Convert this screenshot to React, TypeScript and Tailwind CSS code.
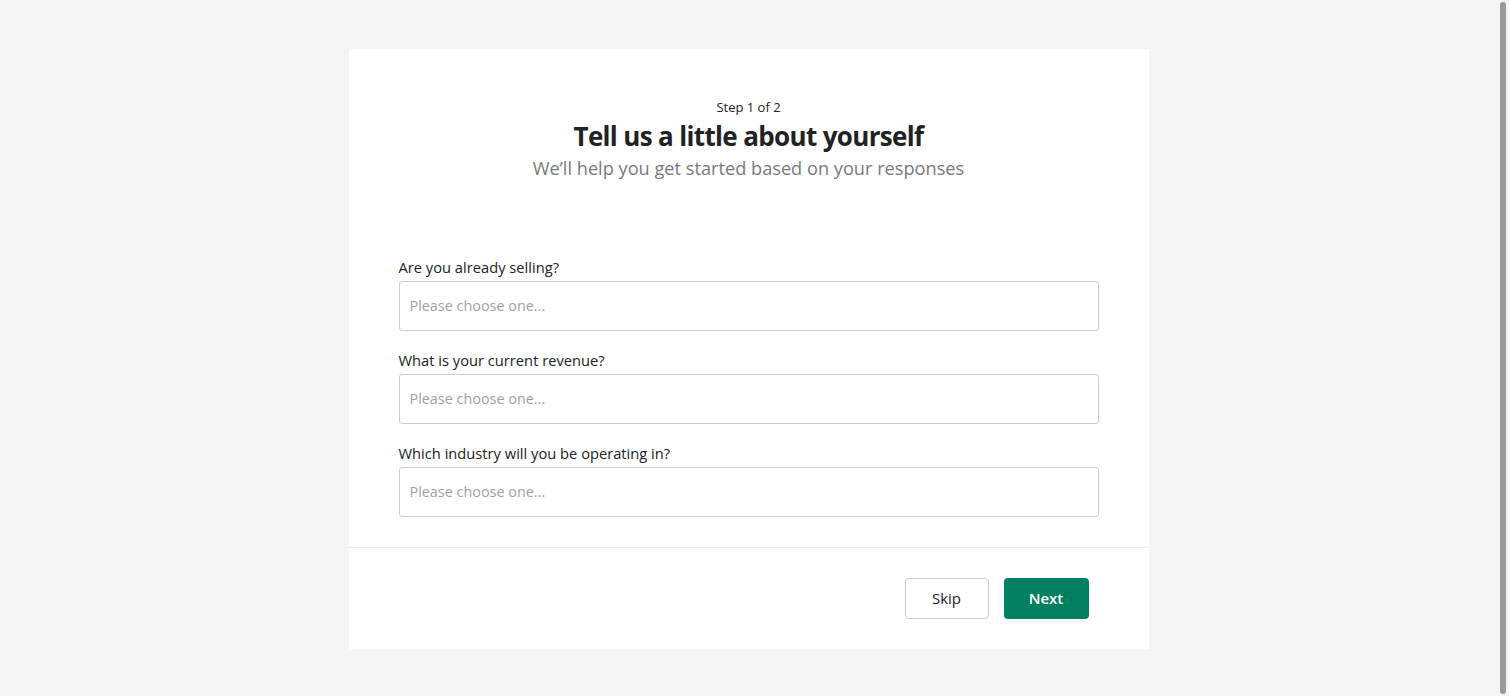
import React from 'react';

const questions = [
  'Are you already selling?',
  'What is your current revenue?',
  'Which industry will you be operating in?',
];

const App: React.FC = () => {
  return (
    <div
      className="flex min-h-screen bg-[#f5f5f5] text-[#202223]"
      style={{ fontFamily: '"Open Sans", "Noto Sans", sans-serif' }}
    >
      <div className="flex-1 pt-[49px] pb-[47px] flex justify-center">
        <div className="w-[800px] bg-white">
          <header className="pt-[49px] flex flex-col items-center text-center">
            <p className="text-[13px] leading-[18px]">Step 1 of 2</p>
            <h1 className="mt-[3px] text-[26px] leading-[34px] font-bold tracking-tight">
              Tell us a little about yourself
            </h1>
            <p className="mt-[2px] text-[18.2px] leading-[26px] text-[#7a7a7a]">
              We’ll help you get started based on your responses
            </p>
          </header>

          <form className="mt-[76px] px-[50px] pb-[30px] flex flex-col gap-[19px]">
            {questions.map((q) => (
              <div key={q} className="flex flex-col gap-[4px]">
                <label className="text-[14.7px] leading-[20px]">{q}</label>
                <button
                  type="button"
                  className="h-[50px] w-full border border-[#c9cccf] rounded-[3px] px-[10px] text-left text-[14.4px] text-[#a1a1a1] bg-white"
                >
                  Please choose one...
                </button>
              </div>
            ))}
          </form>

          <footer className="border-t border-[#ebebeb] pt-[30px] pb-[30px] px-[60px] flex justify-end gap-[15px]">
            <button className="h-[41px] w-[84px] rounded-[4px] border border-[#c9cccf] bg-white text-[15px]">
              Skip
            </button>
            <button className="h-[41px] w-[85px] rounded-[4px] bg-[#008060] text-white text-[15px] font-semibold">
              Next
            </button>
          </footer>
        </div>
      </div>
      <div className="w-[12px] shrink-0 py-[2px] flex justify-center">
        <div className="w-[6px] rounded-full bg-[#9a9a9a]" />
      </div>
    </div>
  );
};

export default App;
